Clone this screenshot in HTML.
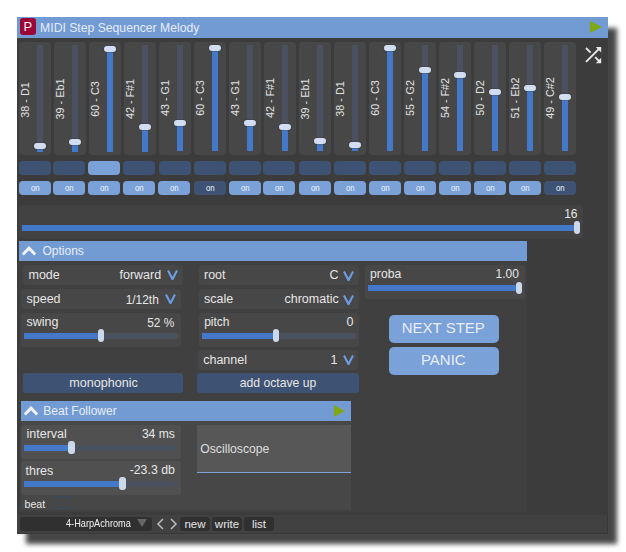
<!DOCTYPE html>
<html><head><meta charset="utf-8">
<style>
*{margin:0;padding:0;box-sizing:border-box}
html,body{width:626px;height:552px;background:#fff;overflow:hidden}
body{position:relative;font-family:"Liberation Sans",sans-serif;font-size:12.5px;color:#e6e6e6}
div{position:absolute}
#shadow{left:25.5px;top:28px;width:591px;height:515.5px;background:#000;filter:blur(2.8px);opacity:.72}
#win{left:17px;top:17px;width:591px;height:517px;background:#3c3c3c;overflow:hidden}
.abs{position:absolute}
#title{left:17px;top:17px;width:591px;height:21px;background:#739bd3}
#picon{left:19.6px;top:18.4px;width:16.6px;height:17px;background:#9b0537;border-radius:3px;color:#f4f4f4;font-size:13px;line-height:18px;text-align:center}
#ttext{left:40.1px;top:20.6px;font-size:12.2px;color:#e4ecf7;white-space:nowrap}
.play{width:0;height:0;border-top:6px solid transparent;border-bottom:6px solid transparent;border-left:12px solid #80a814}
.sp{top:41.7px;width:32px;height:112.9px;background:#474747;border-radius:4px}
.tr{top:45.2px;width:6px;height:106.3px;background:#4b5160}
.fi{width:6px;background:#4479c9}
.kn{width:12.4px;height:6.2px;border-radius:3.1px;background:#d2ddf1;box-shadow:0 0 0 .8px rgba(45,45,45,.3)}
.lb{top:98.1px;width:0;height:0}
.lb span{position:absolute;left:0;top:0;transform:translate(-50%,-50%) rotate(-90deg);font-size:10.8px;white-space:nowrap;color:#e3e3e3}
.sb{top:161px;width:32px;height:14px;border-radius:4px;background:#3e5273}
.sb.cur{background:#7ba1d9}
.ob{top:181px;width:32px;height:14px;border-radius:4px;background:#7ba1d9;font-size:10px;line-height:14px;text-align:center;color:#f0f4fa}
.ob.off{background:#3e5273}
.ob span{display:inline-block;transform:translateY(-.4px) scaleX(.82);font-size:9.5px}
.box{background:#474747;border-radius:3px}
.hdr{background:#739bd3;height:20px}
.t{white-space:nowrap}
.vv{width:11px;height:10px}
.btn{background:#3e5273;border-radius:3px;text-align:center;line-height:20px;font-size:12.2px}
.bbtn{background:#7ba1d9;border-radius:5px;text-align:center;color:#e8eef8;font-size:15px;line-height:25.3px;padding-right:1.4px}
.strk{height:6px;background:#4a505c}
.sfil{height:6px;background:#4479c9}
.hk{width:6px;height:13px;border-radius:3px;background:#ccd8ec}
</style></head><body>
<div id="shadow"></div>
<div id="win"></div>
<div id="title"></div>
<div id="picon">P</div>
<div id="ttext">MIDI Step Sequencer Melody</div>
<div class="play" style="left:590px;top:21px"></div>
<svg style="position:absolute;left:580px;top:42px" width="26" height="26" viewBox="0 0 26 26">
<g stroke="#e8e8e8" stroke-width="1.9" fill="none"><path d="M6 6 L10.6 10.6"/><path d="M15.2 15.2 L19.5 19.5"/><path d="M6 19.8 L19 6.8"/></g>
<path d="M15.8 5 H21.2 V10.4 Z" fill="#e8e8e8"/><path d="M15.8 21.2 H21.2 V15.8 Z" fill="#e8e8e8"/>
</svg>
<div class="sp" style="left:19px"></div>
<div class="tr" style="left:37px"></div>
<div class="fi" style="left:37px;top:146.0px;height:5.8px"></div>
<div class="kn" style="left:33.8px;top:142.9px"></div>
<div class="lb" style="left:24.8px;top:99.60px"><span>38 - D1</span></div>
<div class="sb" style="left:19px"></div>
<div class="ob" style="left:19px"><span>on</span></div>
<div class="sp" style="left:54px"></div>
<div class="tr" style="left:72px"></div>
<div class="fi" style="left:72px;top:142.0px;height:9.8px"></div>
<div class="kn" style="left:68.8px;top:138.9px"></div>
<div class="lb" style="left:59.8px;top:99.30px"><span>39 - Eb1</span></div>
<div class="sb" style="left:53px"></div>
<div class="ob" style="left:53px"><span>on</span></div>
<div class="sp" style="left:89px"></div>
<div class="tr" style="left:107px"></div>
<div class="fi" style="left:107px;top:49.1px;height:102.7px"></div>
<div class="kn" style="left:103.8px;top:46.0px"></div>
<div class="lb" style="left:94.8px;top:98.85px"><span>60 - C3</span></div>
<div class="sb cur" style="left:88px"></div>
<div class="ob" style="left:88px"><span>on</span></div>
<div class="sp" style="left:124px"></div>
<div class="tr" style="left:142px"></div>
<div class="fi" style="left:142px;top:127.0px;height:24.8px"></div>
<div class="kn" style="left:138.8px;top:124.0px"></div>
<div class="lb" style="left:129.8px;top:98.50px"><span>42 - F#1</span></div>
<div class="sb" style="left:123px"></div>
<div class="ob" style="left:123px"><span>on</span></div>
<div class="sp" style="left:159px"></div>
<div class="tr" style="left:177px"></div>
<div class="fi" style="left:177px;top:123.2px;height:27.8px"></div>
<div class="kn" style="left:173.8px;top:120.1px"></div>
<div class="lb" style="left:164.8px;top:98.20px"><span>43 - G1</span></div>
<div class="sb" style="left:159px"></div>
<div class="ob" style="left:158px"><span>on</span></div>
<div class="sp" style="left:194px"></div>
<div class="tr" style="left:212px"></div>
<div class="fi" style="left:212px;top:48.0px;height:103.0px"></div>
<div class="kn" style="left:208.8px;top:44.9px"></div>
<div class="lb" style="left:199.8px;top:98.30px"><span>60 - C3</span></div>
<div class="sb" style="left:194px"></div>
<div class="ob off" style="left:194px"><span>on</span></div>
<div class="sp" style="left:229px"></div>
<div class="tr" style="left:247px"></div>
<div class="fi" style="left:247px;top:123.0px;height:28.0px"></div>
<div class="kn" style="left:243.8px;top:119.9px"></div>
<div class="lb" style="left:234.8px;top:98.35px"><span>43 - G1</span></div>
<div class="sb" style="left:229px"></div>
<div class="ob" style="left:229px"><span>on</span></div>
<div class="sp" style="left:264px"></div>
<div class="tr" style="left:282px"></div>
<div class="fi" style="left:282px;top:127.0px;height:24.0px"></div>
<div class="kn" style="left:278.8px;top:124.0px"></div>
<div class="lb" style="left:269.8px;top:98.40px"><span>42 - F#1</span></div>
<div class="sb" style="left:263px"></div>
<div class="ob" style="left:263px"><span>on</span></div>
<div class="sp" style="left:299px"></div>
<div class="tr" style="left:317px"></div>
<div class="fi" style="left:317px;top:141.0px;height:10.0px"></div>
<div class="kn" style="left:313.8px;top:137.9px"></div>
<div class="lb" style="left:304.8px;top:98.60px"><span>39 - Eb1</span></div>
<div class="sb" style="left:299px"></div>
<div class="ob" style="left:299px"><span>on</span></div>
<div class="sp" style="left:334px"></div>
<div class="tr" style="left:352px"></div>
<div class="fi" style="left:352px;top:145.0px;height:6.0px"></div>
<div class="kn" style="left:348.8px;top:141.9px"></div>
<div class="lb" style="left:339.8px;top:98.90px"><span>38 - D1</span></div>
<div class="sb" style="left:334px"></div>
<div class="ob" style="left:334px"><span>on</span></div>
<div class="sp" style="left:369px"></div>
<div class="tr" style="left:387px"></div>
<div class="fi" style="left:387px;top:48.1px;height:102.9px"></div>
<div class="kn" style="left:383.8px;top:45.0px"></div>
<div class="lb" style="left:374.8px;top:98.20px"><span>60 - C3</span></div>
<div class="sb" style="left:369px"></div>
<div class="ob" style="left:369px"><span>on</span></div>
<div class="sp" style="left:404px"></div>
<div class="tr" style="left:422px"></div>
<div class="fi" style="left:422px;top:70.0px;height:81.0px"></div>
<div class="kn" style="left:418.8px;top:66.9px"></div>
<div class="lb" style="left:409.8px;top:97.70px"><span>55 - G2</span></div>
<div class="sb" style="left:404px"></div>
<div class="ob" style="left:404px"><span>on</span></div>
<div class="sp" style="left:439px"></div>
<div class="tr" style="left:457px"></div>
<div class="fi" style="left:457px;top:75.0px;height:76.0px"></div>
<div class="kn" style="left:453.8px;top:72.0px"></div>
<div class="lb" style="left:444.8px;top:97.70px"><span>54 - F#2</span></div>
<div class="sb" style="left:439px"></div>
<div class="ob" style="left:439px"><span>on</span></div>
<div class="sp" style="left:474px"></div>
<div class="tr" style="left:492px"></div>
<div class="fi" style="left:492px;top:92.1px;height:58.9px"></div>
<div class="kn" style="left:488.8px;top:89.0px"></div>
<div class="lb" style="left:479.8px;top:98.10px"><span>50 - D2</span></div>
<div class="sb" style="left:474px"></div>
<div class="ob" style="left:474px"><span>on</span></div>
<div class="sp" style="left:509px"></div>
<div class="tr" style="left:527px"></div>
<div class="fi" style="left:527px;top:88.0px;height:63.0px"></div>
<div class="kn" style="left:523.8px;top:84.9px"></div>
<div class="lb" style="left:514.8px;top:97.60px"><span>51 - Eb2</span></div>
<div class="sb" style="left:509px"></div>
<div class="ob" style="left:509px"><span>on</span></div>
<div class="sp" style="left:544px"></div>
<div class="tr" style="left:562px"></div>
<div class="fi" style="left:562px;top:97.1px;height:53.9px"></div>
<div class="kn" style="left:558.8px;top:94.0px"></div>
<div class="lb" style="left:549.8px;top:97.90px"><span>49 - C#2</span></div>
<div class="sb" style="left:544px"></div>
<div class="ob off" style="left:544px"><span>on</span></div>
<!-- length slider -->
<div class="box" style="left:19px;top:205px;width:564px;height:33.8px;border-radius:4px;background:#424242"></div>
<div class="t" style="left:564.2px;top:207.2px;font-size:12px">16</div>
<div class="sfil" style="left:22px;top:225px;width:554px"></div>
<div class="hk" style="left:574px;top:221px"></div>
<!-- options section -->
<div style="left:19px;top:261px;width:508px;height:251px;background:#404040"></div>
<div class="hdr" style="left:19px;top:241px;width:508px"></div>
<svg style="position:absolute;left:21px;top:245px" width="17" height="11"><path d="M1.8 9.6 L8 3.2 L14.2 9.6" stroke="#f2f2f2" stroke-width="2.9" fill="none"/></svg>
<div class="t" style="left:42.5px;top:244px;font-size:12px;color:#e6eef8">Options</div>

<div class="box" style="left:23px;top:265px;width:160px;height:20px"></div>
<div class="t" style="left:28.5px;top:268px">mode</div>
<div class="t" style="left:119.5px;top:268px">forward</div>
<div class="box" style="left:21px;top:289px;width:160px;height:20px"></div>
<div class="t" style="left:26.5px;top:292px">speed</div>
<div class="t" style="left:125.7px;top:292.5px;font-size:11.9px">1/12th</div>
<div class="box" style="left:21px;top:313px;width:160px;height:34px"></div>
<div class="t" style="left:26.5px;top:315px">swing</div>
<div class="t" style="left:147.2px;top:315.5px;font-size:11.9px">52 %</div>
<div class="strk" style="left:24px;top:333px;width:154px"></div>
<div class="sfil" style="left:24px;top:333px;width:77px"></div>
<div class="hk" style="left:97.8px;top:329.4px;width:6.4px;height:12.7px"></div>
<div class="btn" style="left:23px;top:373px;width:160px;height:20px;font-size:12.6px;padding-left:1px">monophonic</div>

<div class="box" style="left:199px;top:265px;width:160px;height:20px"></div>
<div class="t" style="left:204px;top:268px">root</div>
<div class="t" style="left:329.5px;top:268px">C</div>
<div class="box" style="left:199px;top:289px;width:160px;height:20px"></div>
<div class="t" style="left:204px;top:292px">scale</div>
<div class="t" style="left:284.5px;top:292px">chromatic</div>
<div class="box" style="left:199px;top:313px;width:160px;height:34px"></div>
<div class="t" style="left:204.2px;top:315.4px;font-size:12px">pitch</div>
<div class="t" style="left:346.5px;top:315px">0</div>
<div class="strk" style="left:202px;top:333px;width:154px"></div>
<div class="sfil" style="left:202px;top:333px;width:74px"></div>
<div class="hk" style="left:272.8px;top:329.3px;width:6.4px;height:12.7px"></div>
<div class="box" style="left:198px;top:350px;width:160px;height:20px"></div>
<div class="t" style="left:203.2px;top:353px">channel</div>
<div class="t" style="left:330.5px;top:353px">1</div>
<div class="btn" style="left:197px;top:373px;width:162px;height:20px">add octave up</div>

<div class="box" style="left:365px;top:265px;width:160px;height:34px"></div>
<div class="t" style="left:370.1px;top:267.2px;font-size:12.2px">proba</div>
<div class="t" style="left:495.6px;top:267.3px;font-size:12px">1.00</div>
<div class="sfil" style="left:368px;top:285px;width:150px"></div>
<div class="hk" style="left:516px;top:282px;height:12px"></div>
<div class="bbtn" style="left:389px;top:315px;width:110px;height:28px">NEXT STEP</div>
<div class="bbtn" style="left:389px;top:347px;width:110px;height:28px">PANIC</div>

<!-- V icons -->
<svg style="position:absolute;left:166.6px;top:270.3px" width="11" height="10"><path d="M1 0.6 L5.5 9.2 L10 0.6" stroke="#6d9de3" stroke-width="2.1" fill="none"/></svg>
<svg style="position:absolute;left:164.8px;top:294.3px" width="11" height="10"><path d="M1 0.6 L5.5 9.2 L10 0.6" stroke="#6d9de3" stroke-width="2.1" fill="none"/></svg>
<svg style="position:absolute;left:343.3px;top:270.8px" width="11" height="10"><path d="M1 0.6 L5.5 9.2 L10 0.6" stroke="#6d9de3" stroke-width="2.1" fill="none"/></svg>
<svg style="position:absolute;left:343.3px;top:294.6px" width="11" height="10"><path d="M1 0.6 L5.5 9.2 L10 0.6" stroke="#6d9de3" stroke-width="2.1" fill="none"/></svg>
<svg style="position:absolute;left:342.5px;top:354.8px" width="11" height="10"><path d="M1 0.6 L5.5 9.2 L10 0.6" stroke="#6d9de3" stroke-width="2.1" fill="none"/></svg>

<!-- beat follower -->
<div style="left:21px;top:421px;width:330px;height:89px;background:#474747"></div>
<div class="hdr" style="left:21px;top:401px;width:330px"></div>
<svg style="position:absolute;left:23px;top:405px" width="17" height="11"><path d="M1.8 9.6 L8 3.2 L14.2 9.6" stroke="#f2f2f2" stroke-width="2.9" fill="none"/></svg>
<div class="t" style="left:43.3px;top:404px;font-size:12px;color:#e6eef8">Beat Follower</div>
<div class="play" style="left:333.9px;top:405px;border-top-width:6px;border-bottom-width:6px;border-left-width:11.7px"></div>
<div class="box" style="left:21px;top:425px;width:160px;height:34px;background:#505050"></div>
<div class="t" style="left:26.5px;top:427px">interval</div>
<div class="t" style="left:141.9px;top:427.3px;font-size:12.1px">34 ms</div>
<div class="strk" style="left:24px;top:445px;width:154px"></div>
<div class="sfil" style="left:24px;top:445px;width:46px"></div>
<div class="hk" style="left:68px;top:441px;width:6.5px;height:13px"></div>
<div class="box" style="left:21px;top:461px;width:160px;height:34px;background:#505050"></div>
<div class="t" style="left:25.5px;top:463.5px">thres</div>
<div class="t" style="left:129.7px;top:463.3px;font-size:12.3px">-23.3 db</div>
<div class="strk" style="left:24px;top:481px;width:154px"></div>
<div class="sfil" style="left:24px;top:481px;width:98px"></div>
<div class="hk" style="left:119.3px;top:477.2px;width:6.3px;height:12.6px"></div>
<div class="t" style="left:24.5px;top:497.8px;font-size:10.6px">beat</div>
<div style="left:56px;top:496px;width:13.5px;height:13px;border:1.5px solid #384a66;border-radius:1px"></div>
<div style="left:197px;top:425px;width:154px;height:47.8px;background:#575757;border-bottom:1px solid #7ba1d9"></div>
<div class="t" style="left:200.3px;top:442px;font-size:12.2px;color:#dedede">Oscilloscope</div>

<!-- bottom bar -->
<div style="left:17px;top:514.6px;width:591px;height:19.4px;background:#414141;border-right:1px solid #383838;border-bottom:1px solid #383838"></div>
<div style="left:19.7px;top:517px;width:132px;height:14px;background:#303030;border-radius:3px"></div>
<div class="t" style="left:66.1px;top:516.6px;font-size:11px;transform:scaleX(.835);transform-origin:0 0;color:#f0f0f0">4-HarpAchroma</div>
<div style="left:136.7px;top:519.3px;width:0;height:0;border-left:5.25px solid transparent;border-right:5.25px solid transparent;border-top:8.8px solid #666"></div>
<svg style="position:absolute;left:154px;top:517px" width="26" height="14"><path d="M9 2 L4 7 L9 12 M17 2 L22 7 L17 12" stroke="#bbb" stroke-width="1.5" fill="none"/></svg>
<div style="left:180px;top:517px;width:30px;height:14px;background:#303030;border-radius:3px;font-size:11.5px;line-height:14px;text-align:center">new</div>
<div style="left:212px;top:517px;width:30px;height:14px;background:#303030;border-radius:3px;font-size:11.5px;line-height:14px;text-align:center">write</div>
<div style="left:244px;top:517px;width:30px;height:14px;background:#303030;border-radius:3px;font-size:11.5px;line-height:14px;text-align:center">list</div>
</body></html>
